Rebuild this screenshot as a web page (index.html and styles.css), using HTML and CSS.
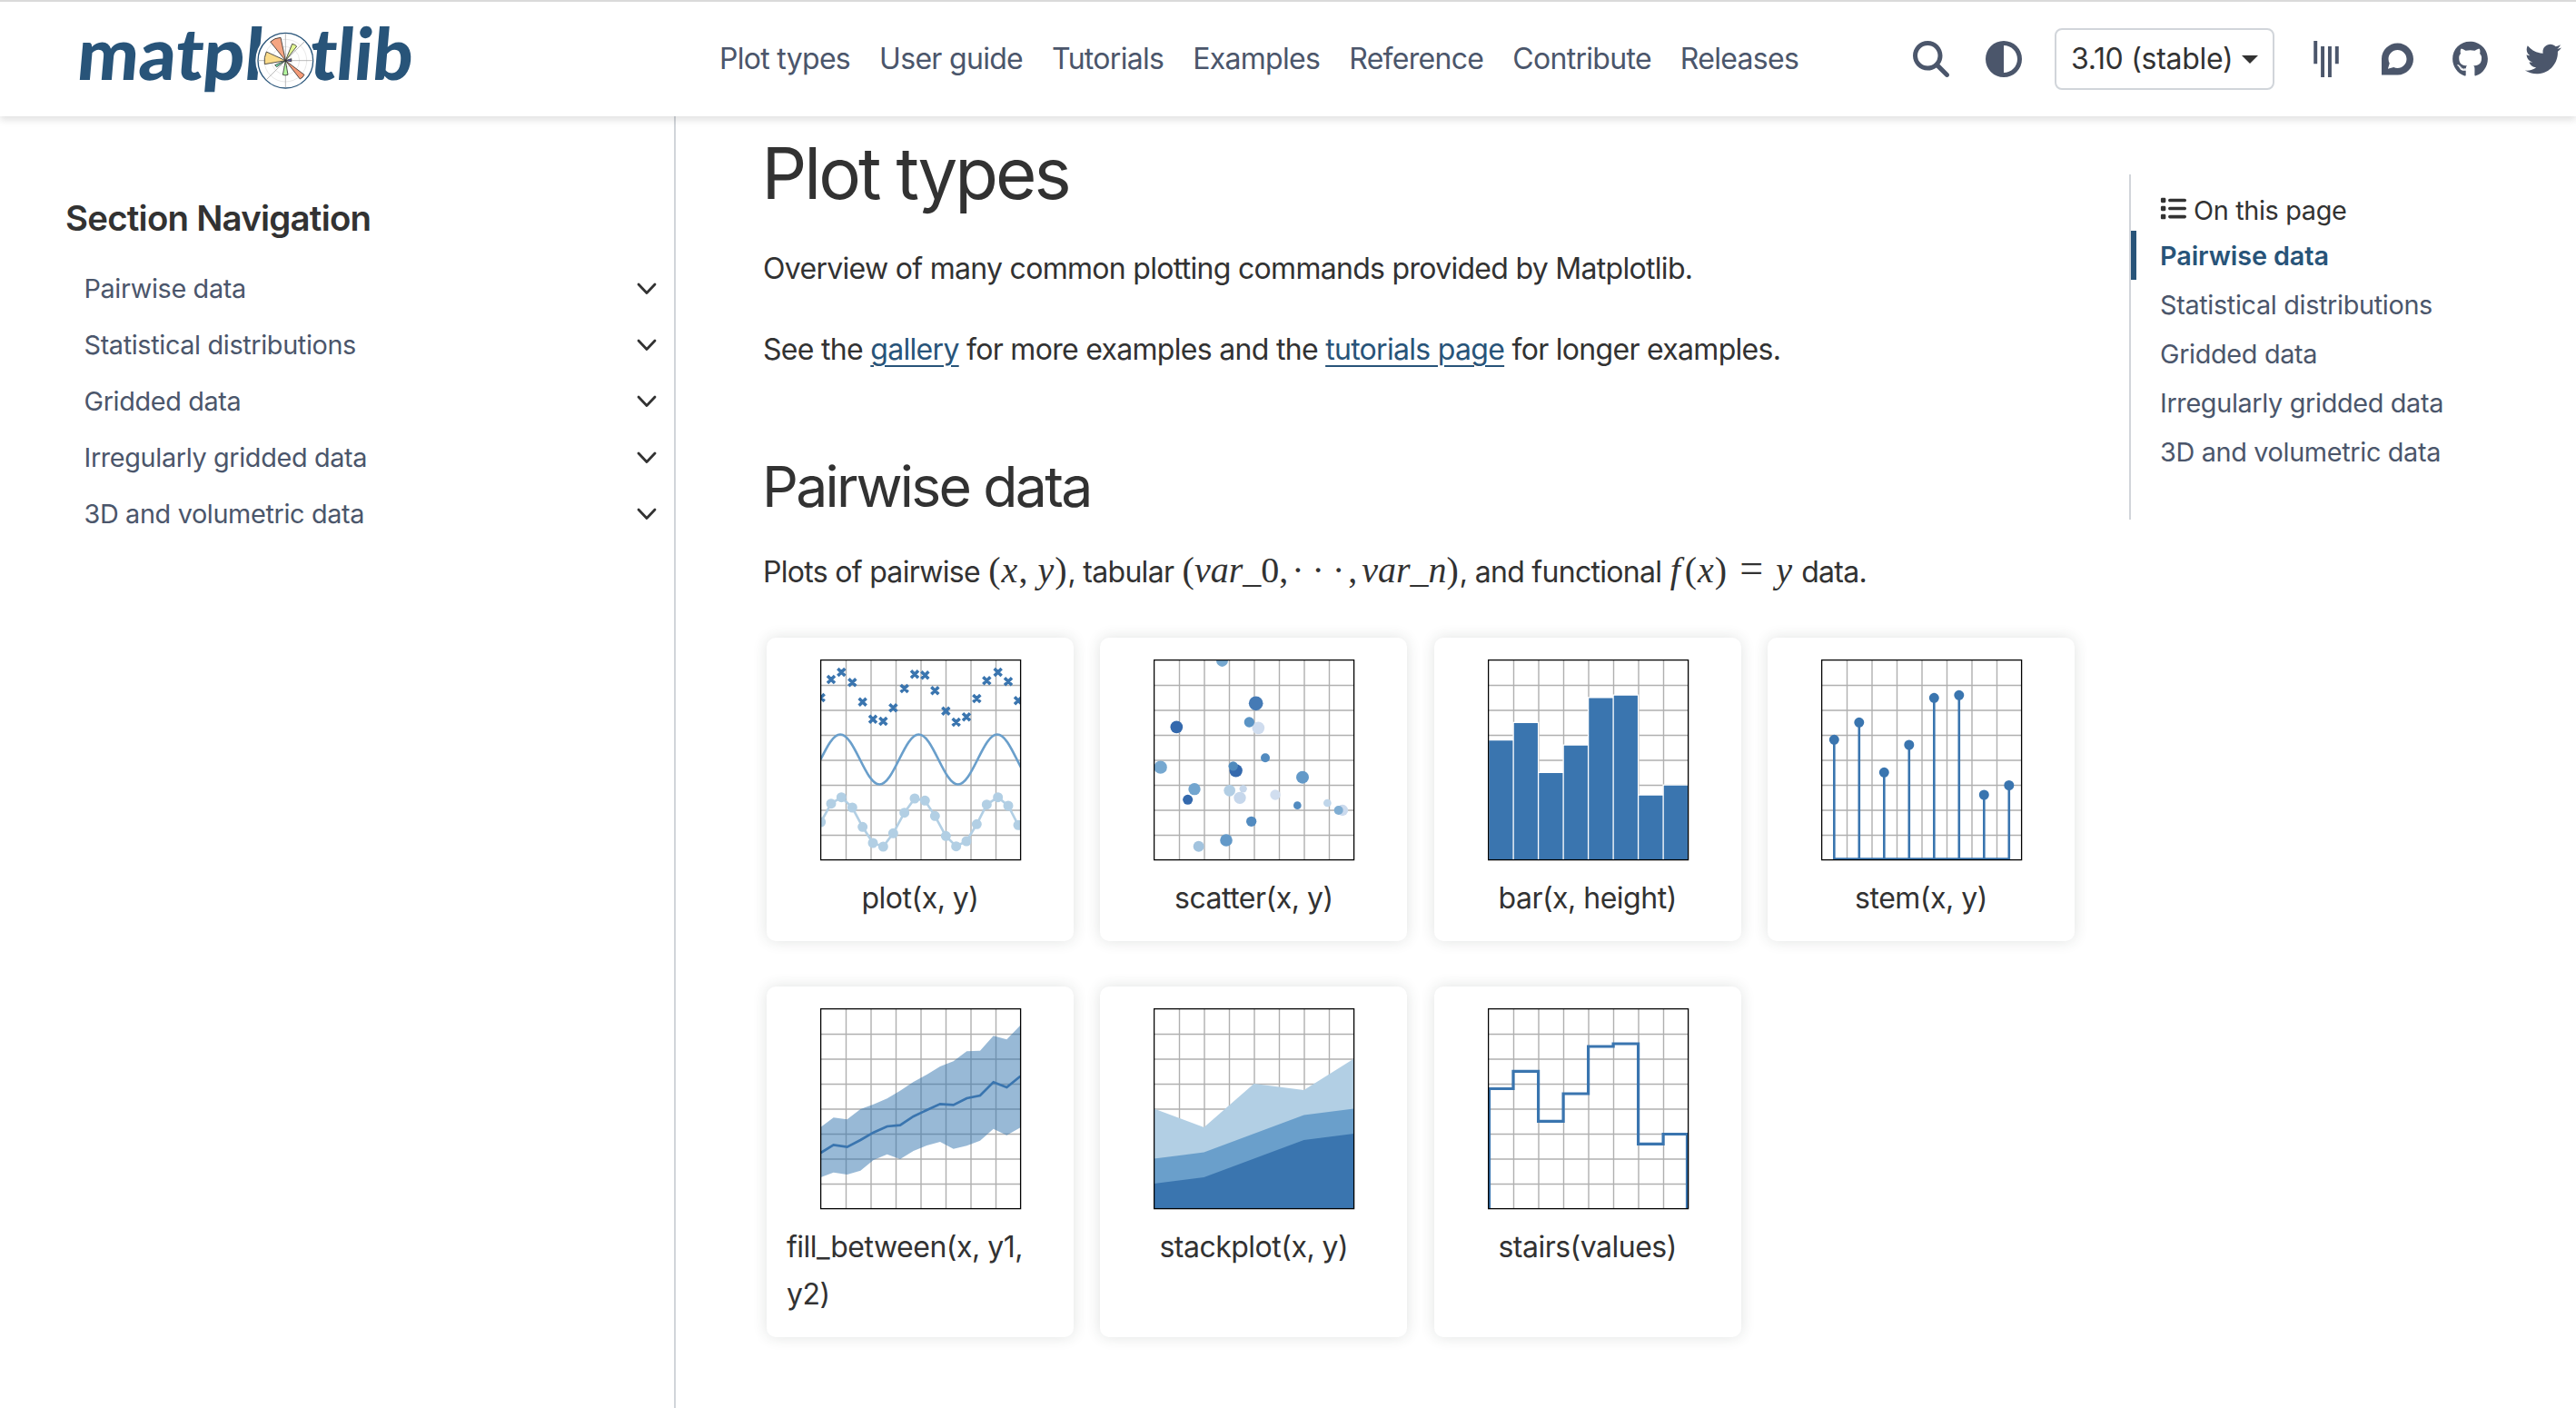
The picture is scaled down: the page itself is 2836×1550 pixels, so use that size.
FILE: index.html
```html
<!DOCTYPE html>
<html lang="en">
<head>
<meta charset="utf-8">
<title>Plot types — Matplotlib 3.10 documentation</title>
<link rel="stylesheet" href="styles.css">
</head>
<body>
<svg class="defs" aria-hidden="true">
  <symbol id="grid" viewBox="0 0 222 222">
    <path d="M28.5 1V221M56 1V221M83.5 1V221M111 1V221M138.5 1V221M166 1V221M193.500 1V221M1 28.500H221M1 56H221M1 83.500H221M1 111H221M1 138.500H221M1 166H221M1 193.500H221" stroke="#b0b0b0" stroke-width="1.400" fill="none"/>
  </symbol>
  <symbol id="frame" viewBox="0 0 222 222">
    <rect x=".6" y=".6" width="220" height="220" fill="none" stroke="#000" stroke-width="1.300"/>
  </symbol>
  <symbol id="chevron" viewBox="0 0 24 16">
    <path d="M3 3l9 9.500L21 3" fill="none" stroke="#323232" stroke-width="2.800" stroke-linecap="round" stroke-linejoin="round"/>
  </symbol>
</svg>

<header class="header">
  <a class="logo">
    <svg viewBox="0 0 1260 378" width="420" height="126">
      <text class="logo-text" transform="translate(70 257) skewX(-5)" textLength="614" lengthAdjust="spacingAndGlyphs">matpl</text>
      <text class="logo-text" transform="translate(838 257) skewX(-5)" textLength="340" lengthAdjust="spacingAndGlyphs">tlib</text>
      <circle cx="763" cy="194" r="99" fill="#fff"/>
      <circle cx="763" cy="194" r="91" fill="#fff" stroke="#285479" stroke-width="4"/>
      <g fill="none" stroke="#ddd" stroke-width="2"><circle cx="763" cy="194" r="22"/><circle cx="763" cy="194" r="46"/><circle cx="763" cy="194" r="70"/></g>
      <path d="M763 104V284M673 194H853M700 257L827 130" stroke="#999" stroke-width="2"/>
      <g stroke="#333" stroke-width="2.500">
        <path d="M763 194L713 132Q727 119 747 118Z" fill="#f5a582"/>
        <path d="M763 194L785 139Q795 141 800 147Z" fill="#e3f893"/>
        <path d="M763 194L694 206Q691 184 700 165Z" fill="#fbdc8b"/>
        <path d="M763 194L825 241Q820 251 811 255Z" fill="#f49b78"/>
        <path d="M763 194L771 241Q762 244 754 241Z" fill="#b3f59e"/>
        <path d="M763 194L734 215L728 209Z" fill="#79e3b5"/>
        <path d="M763 194L782 188V197Z" fill="#5c57b5"/>
      </g>
    </svg>
  </a>
  <nav class="nav">
    <a>Plot types</a><a>User guide</a><a>Tutorials</a><a>Examples</a><a>Reference</a><a>Contribute</a><a>Releases</a>
  </nav>
  <div class="tools">
    <svg class="icon search" viewBox="0 0 512 512" width="40" height="40"><path d="M416 208c0 45.900-14.900 88.300-40 122.700L502.600 457.400c12.500 12.500 12.500 32.800 0 45.300s-32.800 12.500-45.300 0L330.700 376c-34.400 25.200-76.800 40-122.700 40C93.100 416 0 322.900 0 208S93.100 0 208 0S416 93.100 416 208zM208 352a144 144 0 1 0 0-288 144 144 0 1 0 0 288z"/></svg>
    <svg class="icon theme" viewBox="0 0 512 512" width="40" height="40"><path d="M448 256c0-106-86-192-192-192V448c106 0 192-86 192-192zM0 256a256 256 0 1 1 512 0A256 256 0 1 1 0 256z"/></svg>
    <button class="version"><span>3.10 (stable)</span><i class="caret"></i></button>
    <svg class="icon gitter" viewBox="0 0 384 512" width="30" height="40"><path d="M66.400 322.500H16V0h50.400v322.500zM166.900 76.100h-50.400V512h50.400V76.100zm100.600 0h-50.400V512h50.400V76.100zM368 76h-50.400v247H368V76z"/></svg>
    <svg class="icon discourse" viewBox="0 0 448 512" width="35" height="40"><path d="M225.900 32C103.300 32 0 130.500 0 252.100 0 256 .1 480 .1 480l225.800-.2c122.700 0 222.100-102.300 222.100-223.900C448 134.300 348.600 32 225.900 32zM224 384c-19.400 0-37.900-4.300-54.400-12.100L88.500 392l22.900-75c-9.800-18.100-15.400-38.900-15.400-61 0-70.700 57.300-128 128-128s128 57.300 128 128-57.300 128-128 128z"/></svg>
    <svg class="icon github" viewBox="0 0 496 512" width="39" height="40"><path d="M165.900 397.400c0 2-2.300 3.600-5.200 3.600-3.300.3-5.600-1.300-5.600-3.600 0-2 2.300-3.600 5.200-3.600 3-.3 5.600 1.300 5.600 3.600zm-31.100-4.500c-.7 2 1.300 4.300 4.300 4.900 2.600 1 5.600 0 6.200-2s-1.300-4.300-4.300-5.200c-2.600-.7-5.500.3-6.200 2.300zm44.200-1.700c-2.900.7-4.900 2.600-4.600 4.900.3 2 2.900 3.300 5.900 2.600 2.900-.7 4.900-2.600 4.600-4.600-.3-1.900-3-3.200-5.900-2.900zM244.800 8C106.100 8 0 113.300 0 252c0 110.900 69.800 205.800 169.500 239.200 12.800 2.300 17.300-5.600 17.300-12.100 0-6.200-.3-40.400-.3-61.400 0 0-70 15-84.700-29.800 0 0-11.400-29.100-27.800-36.600 0 0-22.900-15.700 1.600-15.400 0 0 24.900 2 38.600 25.800 21.900 38.600 58.600 27.500 72.900 20.900 2.300-16 8.800-27.100 16-33.700-55.900-6.200-112.300-14.300-112.300-110.500 0-27.500 7.600-41.300 23.600-58.900-2.600-6.500-11.100-33.300 2.600-67.900 20.900-6.500 69 27 69 27 20-5.600 41.500-8.500 62.800-8.500s42.800 2.900 62.800 8.500c0 0 48.100-33.600 69-27 13.700 34.700 5.200 61.400 2.600 67.900 16 17.700 25.800 31.500 25.800 58.900 0 96.500-58.900 104.200-114.800 110.500 9.200 7.900 17 22.900 17 46.400 0 33.700-.3 75.400-.3 83.600 0 6.500 4.600 14.400 17.300 12.100C428.200 457.800 496 362.900 496 252 496 113.300 383.500 8 244.800 8zM97.200 352.900c-1.300 1-1 3.300.7 5.200 1.600 1.600 3.900 2.300 5.200 1 1.300-1 1-3.300-.7-5.200-1.600-1.600-3.900-2.300-5.200-1zm-10.800-8.100c-.7 1.300.3 2.900 2.300 3.900 1.600 1 3.600.7 4.300-.7.7-1.300-.3-2.900-2.300-3.900-2-.6-3.600-.3-4.300.7zm32.400 35.600c-1.600 1.300-1 4.300 1.300 6.200 2.300 2.300 5.200 2.600 6.500 1 1.300-1.300.7-4.300-1.300-6.200-2.200-2.300-5.200-2.600-6.500-1zm-11.400-14.700c-1.600 1-1.600 3.600 0 5.900 1.600 2.300 4.300 3.300 5.600 2.300 1.600-1.300 1.600-3.900 0-6.200-1.400-2.300-4-3.300-5.600-2z"/></svg>
    <svg class="icon twitter" viewBox="0 0 512 512" width="40" height="40"><path d="M459.370 151.716c.325 4.548.325 9.097.325 13.645 0 138.720-105.583 298.558-298.558 298.558-59.452 0-114.680-17.219-161.137-47.106 8.447.974 16.568 1.299 25.340 1.299 49.055 0 94.213-16.568 130.274-44.832-46.132-.975-84.792-31.188-98.112-72.772 6.498.974 12.995 1.624 19.818 1.624 9.421 0 18.843-1.300 27.614-3.573-48.081-9.747-84.143-51.980-84.143-102.985v-1.299c13.969 7.797 30.214 12.670 47.431 13.319-28.264-18.843-46.781-51.005-46.781-87.391 0-19.492 5.197-37.360 14.294-52.954 51.655 63.675 129.300 105.258 216.365 109.807-1.624-7.797-2.599-15.918-2.599-24.040 0-57.828 46.782-104.934 104.934-104.934 30.213 0 57.502 12.670 76.670 33.137 23.715-4.548 46.456-13.320 66.599-25.340-7.798 24.366-24.366 44.833-46.132 57.827 21.117-2.273 41.584-8.122 60.426-16.243-14.292 20.791-32.161 39.308-52.628 54.253z"/></svg>
  </div>
</header>

<div class="page">
  <aside class="sidebar">
    <h2 class="sidebar-title">Section Navigation</h2>
    <ul class="sections">
      <li><a>Pairwise data</a><svg width="24" height="16"><use href="#chevron"/></svg></li>
      <li><a>Statistical distributions</a><svg width="24" height="16"><use href="#chevron"/></svg></li>
      <li><a>Gridded data</a><svg width="24" height="16"><use href="#chevron"/></svg></li>
      <li><a>Irregularly gridded data</a><svg width="24" height="16"><use href="#chevron"/></svg></li>
      <li><a>3D and volumetric data</a><svg width="24" height="16"><use href="#chevron"/></svg></li>
    </ul>
  </aside>

  <main class="content">
    <h1>Plot types</h1>
    <p>Overview of many common plotting commands provided by Matplotlib.</p>
    <p>See the <a class="link">gallery</a> for more examples and the <a class="link">tutorials page</a> for longer examples.</p>
    <h2 class="section-title">Pairwise data</h2>
    <p class="math-line">Plots of pairwise <span class="math"><b>(</b><i class="var">x</i>,<s class="thin"></s><i class="var">y</i><b>)</b></span>, tabular <span class="math"><b>(</b><i>var</i>_0,<span class="ellipsis">···</span>,<s class="hair"></s><i>var</i>_<i>n</i><b>)</b></span>, and functional <span class="math"><i class="fn">f</i><b>(</b><i class="var">x</i><b>)</b><span class="equals">=</span><i class="var">y</i></span> data.</p>

    <div class="cards">
      <a class="card">
        <svg class="thumb" viewBox="219 108 666 666">
          <use href="#grid" x="219" y="108" width="666" height="666"/>
          <clipPath id="clip"><rect x="221" y="109" width="659" height="660"/></clipPath>
          <g clip-path="url(#clip)" fill="none">
            <path d="M220.500 438c21.100-42.300 41.300-82.500 64.800-82.500s43.700 40.200 64.800 82.500 41.300 82.500 64.800 82.500 43.700-40.200 64.800-82.500 41.300-82.500 64.800-82.500 43.700 40.200 64.800 82.500 41.300 82.500 64.800 82.500 43.700-40.200 64.800-82.500 41.300-82.500 64.800-82.500 43.700 40.200 64.800 82.500 41.300 82.500 64.800 82.500" stroke="#6a9fcb" stroke-width="8"/>
            <path class="dots-line" d="M221 645L255 584 289 563 325 597 359 661 393 714 427 726 460 682 497 614 531 567 565 574 598 625 634 691 668 725 702 708 736 652 769 587 806 563 840 591 873 655 907 705"/>
            <path class="dots" d="M221 645h0M255 584h0M289 563h0M325 597h0M359 661h0M393 714h0M427 726h0M460 682h0M497 614h0M531 567h0M565 574h0M598 625h0M634 691h0M668 725h0M702 708h0M736 652h0M769 587h0M806 563h0M840 591h0M873 655h0"/>
            <path class="crosses" d="M209 222l24 24m0-24l-24 24M243 162l24 24m0-24l-24 24M277 138l24 24m0-24l-24 24M313 172l24 24m0-24l-24 24M347 236l24 24m0-24l-24 24M381 293l24 24m0-24l-24 24M415 300l24 24m0-24l-24 24M448 256l24 24m0-24l-24 24M485 192l24 24m0-24l-24 24M519 145l24 24m0-24l-24 24M553 148l24 24m0-24l-24 24M586 199l24 24m0-24l-24 24M622 266l24 24m0-24l-24 24M656 303l24 24m0-24l-24 24M690 286l24 24m0-24l-24 24M724 225l24 24m0-24l-24 24M757 166l24 24m0-24l-24 24M794 138l24 24m0-24l-24 24M828 169l24 24m0-24l-24 24M861 232l24 24m0-24l-24 24"/>
          </g>
          <use href="#frame" x="219" y="108" width="666" height="666"/>
        </svg>
        <span class="caption">plot(x, y)</span>
      </a>
      <a class="card">
        <svg class="thumb" viewBox="210 108 666 666">
          <use href="#grid" x="210" y="108" width="666" height="666"/>
          <path d="M417 110a19.500 22 0 0 0 39 0z" fill="#76a8d0"/>
          <circle cx="548" cy="253" r="23.500" fill="#457ab5"/>
          <circle cx="286" cy="331" r="20.500" fill="#3469ad"/>
          <circle cx="556" cy="334" r="20.500" fill="#cfdcee"/>
          <circle cx="526" cy="315" r="17" fill="#5b94c5"/>
          <circle cx="579" cy="433" r="15" fill="#528bc0"/>
          <circle cx="233" cy="464" r="21.500" fill="#76a8d0"/>
          <circle cx="482" cy="475" r="21.500" fill="#3469ad"/>
          <circle cx="473" cy="460" r="15.500" fill="#4f8abd"/>
          <circle cx="702" cy="497" r="21" fill="#6399c8"/>
          <circle cx="345" cy="536" r="20" fill="#72a5cf"/>
          <circle cx="323" cy="571" r="16.500" fill="#3469ad"/>
          <circle cx="461" cy="541" r="19" fill="#b2cee4"/>
          <circle cx="506" cy="535" r="12.500" fill="#c6d7eb"/>
          <circle cx="495" cy="565" r="20" fill="#c6d7eb"/>
          <circle cx="612" cy="555" r="17" fill="#d1deef"/>
          <circle cx="685" cy="590" r="13" fill="#528bc0"/>
          <circle cx="784" cy="582" r="13" fill="#c0d6ea"/>
          <circle cx="834" cy="606" r="18.500" fill="#cbdaed"/>
          <circle cx="821" cy="606" r="15" fill="#80aed3"/>
          <circle cx="533" cy="643" r="17" fill="#528bc0"/>
          <circle cx="450" cy="705" r="20.500" fill="#6399c8"/>
          <circle cx="359" cy="725" r="18" fill="#a2c3de"/>
          <use href="#frame" x="210" y="108" width="666" height="666"/>
        </svg>
        <span class="caption">scatter(x, y)</span>
      </a>
      <a class="card">
        <svg class="thumb" viewBox="0 0 222 222">
          <use href="#grid"/>
          <g fill="#3a75af" stroke="#fff" stroke-width="1.300">
            <path d="M.6 88.600h27.500v132H.6zM28.100 69.400h27.500v151.200H28.100zM55.600 124.400h27.500v96.200H55.600zM83.100 94.100h27.500v126.500H83.100zM110.600 41.900h27.500v178.700h-27.500zM138.100 39.100h27.500v181.500h-27.500zM165.600 149.100h27.500v71.500h-27.500zM193.100 138.100h27.500v82.500h-27.500z"/>
          </g>
          <use href="#frame"/>
        </svg>
        <span class="caption">bar(x, height)</span>
      </a>
      <a class="card">
        <svg class="thumb" viewBox="0 0 222 222">
          <use href="#grid"/>
          <path d="M14.300 89V220M41.800 69.500V220M69.300 124.500V220M96.800 94V220M124.300 42V220M151.800 39V220M179.300 149V220M206.800 138V220M14 219.500H207" fill="none" stroke="#3a75af" stroke-width="2.600"/>
          <path d="M14.300 88.300h0M41.800 69.300h0M69.300 124.300h0M96.800 94h0M124.300 42.300h0M151.800 39.300h0M179.300 149h0M206.800 138.500h0" stroke="#3a75af" stroke-width="11" stroke-linecap="round"/>
          <use href="#frame"/>
        </svg>
        <span class="caption">stem(x, y)</span>
      </a>
      <a class="card">
        <svg class="thumb" viewBox="219 120 666 666">
          <use href="#grid" x="219" y="120" width="666" height="666"/>
          <path d="M221 512L263 481 308 487 352 453 395 437 440 418 483 392 527 363 571 339 615 312 659 295 703 262 747 260 791 211 835 223 880 176V514L835 539 791 518 747 557 703 574 659 584 615 561 571 573 527 591 483 618 440 602 395 621 352 656 308 669 263 662 221 678Z" fill="#3274ae" fill-opacity=".5"/>
          <path d="M221 597L263 571 308 578 352 555 395 530 440 510 483 506 527 477 571 456 615 436 659 439 703 417 747 408 791 364 835 381 880 344" fill="none" stroke="#3a75af" stroke-width="8"/>
          <use href="#frame" x="219" y="120" width="666" height="666"/>
        </svg>
        <span class="caption">fill_between(x, y1, y2)</span>
      </a>
      <a class="card">
        <svg class="thumb" viewBox="0 0 222 222">
          <use href="#grid"/>
          <path d="M.5 110.500L55.500 131.100 110.500 83 165.500 89.900 220.500 55.500V220.500H.5z" fill="#b2cfe4"/>
          <path d="M.5 165.500L55.500 158.600 110.500 138 165.500 117.400 220.500 110.500V220.500H.5z" fill="#6a9fcb"/>
          <path d="M.5 193L55.500 186.100 110.500 165.500 165.500 144.900 220.500 138V220.500H.5z" fill="#3a75af"/>
          <use href="#frame"/>
        </svg>
        <span class="caption">stackplot(x, y)</span>
      </a>
      <a class="card">
        <svg class="thumb" viewBox="0 0 222 222">
          <use href="#grid"/>
          <path d="M1.500 220V88.500H28V69.300H55.600V124.300H83.100V94H110.600V42H138.100V39H165.600V149.300H193.100V138.500H219.500V220" fill="none" stroke="#3a75af" stroke-width="3.200"/>
          <use href="#frame"/>
        </svg>
        <span class="caption">stairs(values)</span>
      </a>
    </div>
  </main>

  <aside class="toc">
    <div class="toc-title">
      <svg viewBox="0 0 512 512" width="29" height="29"><path d="M40 48C26.700 48 16 58.700 16 72v48c0 13.300 10.700 24 24 24H88c13.300 0 24-10.700 24-24V72c0-13.300-10.700-24-24-24H40zM192 64c-17.700 0-32 14.300-32 32s14.300 32 32 32H480c17.700 0 32-14.300 32-32s-14.300-32-32-32H192zm0 160c-17.700 0-32 14.300-32 32s14.300 32 32 32H480c17.700 0 32-14.300 32-32s-14.300-32-32-32H192zm0 160c-17.700 0-32 14.300-32 32s14.300 32 32 32H480c17.700 0 32-14.300 32-32s-14.300-32-32-32H192zM16 232v48c0 13.300 10.700 24 24 24H88c13.300 0 24-10.700 24-24V232c0-13.300-10.700-24-24-24H40c-13.300 0-24 10.700-24 24zM40 368c-13.300 0-24 10.700-24 24v48c0 13.300 10.700 24 24 24H88c13.300 0 24-10.700 24-24V392c0-13.300-10.700-24-24-24H40z"/></svg>
      <span>On this page</span>
    </div>
    <ul class="toc-list">
      <li class="active"><a>Pairwise data</a></li>
      <li><a>Statistical distributions</a></li>
      <li><a>Gridded data</a></li>
      <li><a>Irregularly gridded data</a></li>
      <li><a>3D and volumetric data</a></li>
    </ul>
  </aside>
</div>
</body>
</html>
```
FILE: styles.css
```css
* { box-sizing: border-box; }
body {
  margin: 0;
  background: #fff;
  color: #323232;
  font-family: Inter, "Liberation Sans", sans-serif;
  font-size: 32px;
  line-height: 52.8px;
  letter-spacing: -.7px;
  overflow: hidden;
}
h1, h2, p, ul { margin: 0; padding: 0; font-weight: 400; }
ul { list-style: none; }
.defs { display: none; }

.header {
  position: relative;
  display: flex;
  align-items: center;
  height: 128px;
  border-top: 2px solid #dadada;
  padding: 0 16px 0 60px;
  background: #fff;
  box-shadow: 0 4px 8px rgba(0, 0, 0, .12);
}
.logo svg { display: block; }
.logo-text {
  font: 900 238px Lato, sans-serif;
  letter-spacing: 0;
  fill: #285479;
}
.nav {
  display: flex;
  gap: 32px;
  margin-left: 312px;
  color: #4b566b;
}
.tools { display: flex; align-items: center; margin-left: auto; }
.icon { fill: #4b566b; }
.theme { margin-left: 40px; }
.version {
  display: flex;
  align-items: center;
  justify-content: space-between;
  width: 242px;
  height: 68px;
  margin-left: 36px;
  padding: 0 16px 0 16px;
  border: 2px solid #d1d5da;
  border-radius: 8px;
  background: #fff;
  color: #323232;
  font: inherit;
  letter-spacing: -.3px;
}
.caret {
  border: 9px solid transparent;
  border-top-color: #323232;
  border-bottom: 0;
}
.gitter { margin-left: 42px; }
.discourse { margin-left: 46px; }
.github { margin-left: 43px; }
.twitter { margin-left: 41px; }

.page { display: grid; grid-template-columns: 744px 1600px 1fr; height: 1422px; }

.sidebar { border-right: 2px solid #d1d5da; padding: 90px 18px 0 72px; }
.sidebar-title { font-size: 38.4px; font-weight: 600; line-height: 44px; letter-spacing: -.75px; }
.sections { margin-top: 25px; padding-left: 20.5px; font-size: 28.8px; letter-spacing: -.35px; color: #4b566b; }
.sections li { display: flex; align-items: center; justify-content: space-between; height: 62px; }

.content { padding: 17px 60px 0 96px; }
h1 { font-size: 78px; line-height: 92px; margin: 0 0 33px -1.5px; letter-spacing: -3px; }
.content p { margin-bottom: 36px; }
.section-title { font-size: 62.5px; line-height: 73.6px; margin: 87.2px 0 32px -1px; letter-spacing: -2.7px; }
.link { color: #285479; text-decoration: underline; text-decoration-thickness: 2px; text-underline-offset: 6px; }
.content .math-line { margin-bottom: 45px; white-space: pre; }
.math { font: 40px/0 "Liberation Serif", serif; letter-spacing: 0; margin: 0 1px; }
.math b { font-weight: 400; }
.math s { display: inline-block; }
.var { margin: 0 1px; }
.thin { width: 10px; }
.hair { width: 5px; }
.equals { margin: 0 13px 0 14px; font-size: 46px; }
.fn { margin-right: 5px; }
.ellipsis { margin: 0 -5px 0 4px; letter-spacing: 9px; }

.cards {
  display: grid;
  grid-template-columns: repeat(4, 1fr);
  gap: 50px 29.3px;
  width: 1440px;
  margin-left: 4px;
}
.card {
  display: flex;
  flex-direction: column;
  align-items: center;
  padding: 24px 22px 21px;
  border-radius: 10px;
  box-shadow: 0 0 16px rgba(40, 60, 50, .14);
}
.thumb { width: 222px; height: 222px; margin-left: 2px; }
.caption { margin-top: 15px; line-height: 52px; letter-spacing: -.5px; }
.dots-line { stroke: #b2cfe4; stroke-width: 8; }
.dots { stroke: #b2cfe4; stroke-width: 33; stroke-linecap: round; }
.crosses { stroke: #3a75af; stroke-width: 10.5; }

.toc { align-self: start; height: 380px; margin-top: 64px; border-left: 2px solid #d1d5da; font-size: 28.8px; letter-spacing: -.33px; }
.toc-title { display: flex; align-items: center; gap: 8px; height: 62px; padding: 17.5px 0 0 32px; line-height: 44.5px; }
.toc-title svg { fill: #323232; margin-top: -4px; }
.toc-list { color: #4b566b; line-height: 56px; }
.toc-list li { height: 54px; padding-left: 32px; }
.toc-list .active { padding-left: 26px; border-left: 6px solid #285479; color: #285479; font-weight: 600; letter-spacing: -.1px; }
```
